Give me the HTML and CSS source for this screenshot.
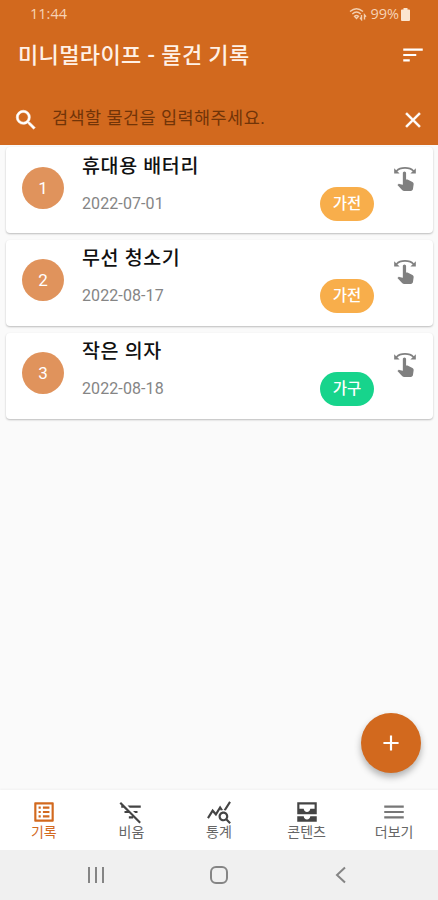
FILE: index.html
```html
<!DOCTYPE html>
<html lang="ko">
<head>
<meta charset="utf-8">
<meta name="viewport" content="width=device-width, initial-scale=1">
<title>미니멀라이프 - 물건 기록</title>
<link rel="stylesheet" href="styles.css">
</head>
<body>
<svg width="0" height="0" class="defs" aria-hidden="true">
  <symbol id="swipe" viewBox="0 0 24 24">
    <path d="M18.89 14.75l-4.09-2.04c-.28-.14-.58-.21-.89-.21H13v-6C13 5.67 12.33 5 11.5 5S10 5.67 10 6.500v10.740l-3.250-.740c-.33-.070-.68.030-.92.280L5 17.620l4.540 4.790c.38.380 1.140.590 1.670.590h6.160c1 0 1.840-.730 1.980-1.720l.63-4.460c.12-.85-.32-1.690-1.090-2.070z"/>
    <path d="M20.130 3.870C18.690 2.170 15.600 1 12 1S5.310 2.170 3.870 3.870L2 2v5h5L4.930 4.930c1-1.290 3.700-2.430 7.070-2.430s6.070 1.140 7.070 2.430L17 7h5V2l-1.870 1.870z"/>
  </symbol>
</svg>
<div class="app">
  <header class="header">
    <div class="status">
      <span class="clock">11:44</span>
      <span class="signals">
        <svg width="18" height="14" viewBox="0 0 18 14" fill="none" stroke="#f3cfb0" stroke-width="1.4"><path d="M1 4.500Q7.500-1 14 4.500M3.300 7Q7.500 3.200 11.700 7M5.500 9.300Q7.500 7.500 9.500 9.300L7.500 11.500ZM12.500 8v4.500l-1.500-1.800M15.500 12.500V8l1.500 1.800"/></svg>
        <span class="percent">99%</span>
        <svg width="9" height="13" viewBox="0 0 9 14" preserveAspectRatio="none" fill="#fbe5cf"><path d="M2.500 0h4v1.500H8q1 0 1 1V13q0 1-1 1H1q-1 0-1-1V2.500q0-1 1-1h1.500z"/></svg>
      </span>
    </div>
    <div class="titlebar">
      <h1>미니멀라이프 - 물건 기록</h1>
      <svg width="26" height="26" viewBox="0 0 24 24" fill="#fff"><path d="M3 18h6v-2H3v2zM3 6v2h18V6H3zm0 7h12v-2H3v2z"/></svg>
    </div>
    <div class="search">
      <svg width="26" height="26" viewBox="0 0 24 24" fill="#fff" stroke="#fff" stroke-width=".5"><path d="M15.500 14h-.79l-.28-.27A6.471 6.471 0 0 0 16 9.500 6.500 6.500 0 1 0 9.500 16c1.610 0 3.090-.59 4.230-1.570l.27.280v.79l5 4.990L20.490 19l-4.990-5zm-6 0C7.010 14 5 11.990 5 9.500S7.010 5 9.500 5 14 7.010 14 9.500 11.990 14 9.500 14z"/></svg>
      <span class="placeholder">검색할 물건을 입력해주세요.</span>
      <svg width="26" height="26" viewBox="0 0 24 24" fill="#fff" stroke="#fff" stroke-width=".3"><path d="M19 6.410L17.590 5 12 10.590 6.410 5 5 6.410 10.590 12 5 17.590 6.410 19 12 13.410 17.590 19 19 17.590 13.410 12z"/></svg>
    </div>
  </header>
  <main class="list">
    <article class="card">
      <span class="num">1</span>
      <div class="info"><h2>휴대용 배터리</h2><time>2022-07-01</time></div>
      <span class="tag">가전</span>
      <svg class="swipe" width="26" height="26"><use href="#swipe"/></svg>
    </article>
    <article class="card">
      <span class="num">2</span>
      <div class="info"><h2>무선 청소기</h2><time>2022-08-17</time></div>
      <span class="tag">가전</span>
      <svg class="swipe" width="26" height="26"><use href="#swipe"/></svg>
    </article>
    <article class="card">
      <span class="num">3</span>
      <div class="info"><h2>작은 의자</h2><time>2022-08-18</time></div>
      <span class="tag green">가구</span>
      <svg class="swipe" width="26" height="26"><use href="#swipe"/></svg>
    </article>
  </main>
  <button class="fab" aria-label="추가"><svg width="26" height="26" viewBox="0 0 24 24" fill="#fff"><path d="M19 13h-6v6h-2v-6H5v-2h6V5h2v6h6v2z"/></svg></button>
  <nav class="tabs">
    <a class="tab active"><svg width="26" height="26" viewBox="0 0 24 24"><path d="M19 5v14H5V5h14m1.100-2H3.900c-.5 0-.9.400-.9.900v16.200c0 .4.400.9.900.9h16.200c.4 0 .9-.5.900-.9V3.900c0-.5-.5-.9-.9-.9zM11 7h6v2h-6V7zm0 4h6v2h-6v-2zm0 4h6v2h-6v-2zM7 7h2v2H7V7zm0 4h2v2H7v-2zm0 4h2v2H7v-2z"/></svg><span>기록</span></a>
    <a class="tab"><svg width="26" height="26" viewBox="0 0 24 24"><path d="M10.830 8H21V6H8.830l2 2zm5 5H18v-2h-4.170l2 2zM14 16.830V18h-4v-2h3.170l-3-3H6v-2h2.170l-3-3H3V6h.17L1.390 4.220 2.800 2.810l18.380 18.380-1.410 1.410L14 16.830z"/></svg><span>비움</span></a>
    <a class="tab"><svg width="26" height="26" viewBox="0 0 24 24"><path d="M19.880 18.470c.44-.7.700-1.510.7-2.390 0-2.490-2.010-4.500-4.500-4.500s-4.500 2.010-4.500 4.500 2.010 4.500 4.490 4.500c.88 0 1.700-.26 2.390-.7L21.580 23 23 21.580l-3.120-3.110zm-3.800.110c-1.380 0-2.500-1.120-2.500-2.500s1.120-2.500 2.500-2.500 2.500 1.120 2.500 2.500-1.120 2.500-2.500 2.500zm-.36-8.500c-.74.020-1.450.180-2.100.450l-.55-.83-3.800 6.180-3.010-3.520-3.630 5.810L1 17l5-8 3 3.500L13 6l2.720 4.080zm2.590.500c-.64-.28-1.330-.45-2.050-.49L21.380 2 23 3.180l-4.690 7.400z"/></svg><span>통계</span></a>
    <a class="tab"><svg width="26" height="26" viewBox="0 0 24 24"><path d="M21 3H3v11h18V3zm-2 6h-4c0 1.620-1.380 3-3 3s-3-1.380-3-3H5V5h14v4zm-4 7h6v5H3v-5h6c0 1.660 1.340 3 3 3s3-1.340 3-3z"/></svg><span>콘텐츠</span></a>
    <a class="tab more"><svg width="26" height="26" viewBox="0 0 24 24"><path d="M3 18h18v-2H3v2zm0-5h18v-2H3v2zm0-7v2h18V6H3z"/></svg><span>더보기</span></a>
  </nav>
  <footer class="sysnav">
    <svg width="18" height="18" viewBox="0 0 18 18"><path d="M2 1v16M9 1v16M16 1v16"/></svg>
    <svg width="18" height="18" viewBox="0 0 18 18"><rect x="1" y="1" width="16" height="16" rx="5"/></svg>
    <svg width="18" height="18" viewBox="0 0 18 18"><path d="M13 1.500L5 9l8 7.500"/></svg>
  </footer>
</div>
</body>
</html>
```

FILE: styles.css
```css
* { box-sizing: border-box; margin: 0; padding: 0; }
body { font-family: Roboto, "Noto Sans CJK KR", sans-serif; background: #fafafa; }
svg { display: block; flex: none; }
.defs { position: absolute; }
.app { position: relative; width: 438px; height: 900px; display: flex; flex-direction: column; overflow: hidden; }
.header { height: 145px; flex: none; background: #d2691e; display: flex; flex-direction: column; }
.status { height: 28px; display: flex; align-items: center; justify-content: space-between; padding: 0 28px 0 30px; color: #f6d3b6; font-family: "Open Sans", sans-serif; font-size: 14.500px; line-height: 28px; }
.signals { display: flex; align-items: center; gap: 3px; }
.percent { font-size: 14.500px; margin-right: -1px; }
.titlebar { height: 54px; display: flex; align-items: center; justify-content: space-between; padding: 0 12px 0 18px; }
h1 { font-size: 22px; letter-spacing: .38px; line-height: 54px; padding-top: 2px; font-weight: 500; color: #fff1e6; white-space: nowrap; }
.search { height: 63px; padding: 12px 12px 0 13px; display: flex; align-items: center; }
.placeholder { flex: 1; margin: -4px 0 0 13px; font-size: 17.500px; letter-spacing: .45px; line-height: 30px; color: #713408; white-space: nowrap; }
.list { flex: 1; padding: 2px 5px 0 6px; display: flex; flex-direction: column; gap: 6.800px; }
.card { height: 86px; flex: none; display: flex; background: #fff; border-radius: 4px; box-shadow: 0 1px 2px rgba(0,0,0,.25); padding: 0 15px 0 16px; }
.num { width: 42px; height: 42px; margin-top: 19.500px; border-radius: 50%; background: #e0935c; color: #fff; font-size: 17px; line-height: 42px; text-align: center; }
.info { flex: 1; margin-left: 18px; }
h2 { font-size: 19.500px; letter-spacing: .65px; line-height: 28px; margin-top: 5.500px; font-weight: 500; color: #111; white-space: nowrap; }
time { display: block; margin-top: 13px; font-size: 16px; line-height: 20px; color: #858585; letter-spacing: .1px; }
.tag { width: 54px; height: 34px; margin-top: 39.500px; border-radius: 17px; background: #f8ae4b; color: #fff; font-size: 15.500px; line-height: 35px; text-align: center; font-weight: 500; }
.tag.green { background: #17d48c; }
.swipe { margin: 19px 0 0 18px; fill: #808080; }
.fab { position: absolute; left: 361px; top: 713px; width: 60px; height: 60px; border: 0; border-radius: 50%; background: #d2691e; box-shadow: 0 4px 7px rgba(0,0,0,.3); display: grid; place-items: center; }
.tabs { height: 60px; flex: none; background: #fff; display: grid; grid-template-columns: repeat(5, 1fr); box-shadow: 0 -1px 2px rgba(0,0,0,.04); }
.tab { display: flex; flex-direction: column; align-items: center; padding-top: 9px; font-size: 14px; line-height: 15px; color: #666; }
.tab svg { fill: #444; }
.tab.active { color: #d2691e; }
.tab.active svg { fill: #d2691e; }
.tab.more svg { fill: #777; }
.sysnav { height: 50px; flex: none; background: #f0f0f0; display: flex; align-items: center; justify-content: space-between; padding: 0 88px 0 87px; }
.sysnav svg { fill: none; stroke: #858585; stroke-width: 2; }
```
